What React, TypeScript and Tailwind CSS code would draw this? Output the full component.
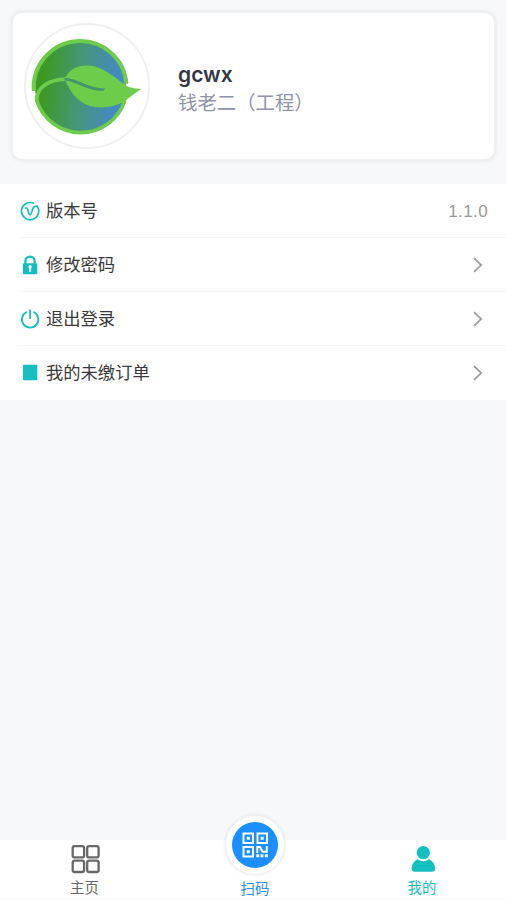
import type { ReactNode } from "react";

interface MenuRowProps {
    icon: ReactNode;
    label: string;
    value?: string;
    last?: boolean;
}

function LeafLogo() {
    return (
        <svg viewBox="25 24 124 124" className="h-[124px] w-[124px] shrink-0">
            <defs>
                <linearGradient id="disc" x1="0" y1="0.45" x2="1" y2="0.55">
                    <stop offset="0.08" stopColor="#3d9921" />
                    <stop offset="0.5" stopColor="#46967a" />
                    <stop offset="0.92" stopColor="#4389c6" />
                </linearGradient>
            </defs>
            <circle cx="80.5" cy="86.2" r="45.5" fill="url(#disc)" />
            <path d="M33.8 91A46.3 46.3 0 0 1 126.4 84" fill="none" stroke="#6dcc49" strokeWidth="4" />
            <path d="M66 79.2C48 79.5 36.4 88 36.7 100.5A46.3 46.3 0 0 0 124.8 100.5" fill="none" stroke="#6dcc49" strokeWidth="3.8" strokeLinejoin="round" />
            <path d="M65 78C70 69 78 65 88 65.5C102 66 113 76 124 84C129 88 134 88.5 141 89C135 93 130 97 125 101C115 107 102 109 90 106C77 102 70 91 65 80Z" fill="#6dcc49" />
            <path d="M64.5 78C78 78 86 88 105.5 88.5L103 90.8C86 91 77 81 64.5 80.4Z" fill="#44956d" />
        </svg>
    );
}

function VersionIcon() {
    return (
        <svg viewBox="0 0 20 20" className="h-5 w-5" fill="none" stroke="#13bfc1" strokeWidth="1.7" strokeLinecap="round" strokeLinejoin="round">
            <path d="M13.4 2.2A8.6 8.6 0 1 0 17.4 5.6" />
            <path d="M5.8 7C7.2 6.6 7.6 8 8.2 10C8.8 12 9.1 14 10 14C11 14 12 9.8 13.1 7.2C13.8 5.6 15.4 4.8 17.2 5.4" />
        </svg>
    );
}

function LockIcon() {
    return (
        <svg viewBox="0 0 20 20" className="h-5 w-5">
            <path d="M5.4 9V6.2C5.4 3.4 7.4 1.6 10 1.6C12.6 1.6 14.6 3.4 14.6 6.2V9" fill="none" stroke="#13bfc1" strokeWidth="2.3" />
            <rect x="2.9" y="8.2" width="14.4" height="11" rx="1" fill="#13bfc1" />
            <path d="M8.4 11.8A1.7 1.7 0 1 1 11.1 13.1V16.8H9V13.1A1.6 1.6 0 0 1 8.4 11.8Z" fill="white" />
        </svg>
    );
}

function PowerIcon() {
    return (
        <svg viewBox="0 0 20 20" className="h-5 w-5" fill="none" stroke="#13bfc1" strokeWidth="1.8" strokeLinecap="round">
            <path d="M6.2 3.2A8.2 8.2 0 1 0 14 3.2M10.1 1.2V9.2" />
        </svg>
    );
}

function OrderIcon() {
    return (
        <svg viewBox="0 0 20 20" className="h-5 w-5">
            <rect x="3" y="1.8" width="14.3" height="15.4" rx="0.8" fill="#13bfc1" />
        </svg>
    );
}

function MenuRow({ icon, label, value, last }: MenuRowProps) {
    return (
        <div className="flex h-[54px] pl-5">
            <div className={`flex flex-1 items-center border-b pr-[19px] ${last ? "border-white" : "border-[#f5f6f7]"}`}>
                {icon}
                <span className="ml-1.5 flex-1 pt-px text-[17.3px] leading-6 text-[#3a3a3a]">{label}</span>
                {value ? (
                    <span className="pt-0.5 text-[17px] tracking-[0.4px] text-[#999]">{value}</span>
                ) : (
                    <svg viewBox="0 0 10 16" className="mr-[5px] h-4 w-2.5" fill="none" stroke="#999" strokeWidth="1.7">
                        <path d="M1 1.2L8.2 8L1 14.8" />
                    </svg>
                )}
            </div>
        </div>
    );
}

function QrIcon() {
    return (
        <svg viewBox="0 0 26 26" className="h-[26px] w-[26px]" fill="none" stroke="white" strokeWidth="2">
            <path d="M1.5 1.5H11V11H1.5ZM15.5 1.5H25V11H15.5ZM1.5 15H11V24.5H1.5Z" />
            <path d="M4.8 4.8H7.8V7.8H4.8ZM18.7 4.8H21.7V7.8H18.7ZM4.8 18.3H7.8V21.3H4.8Z" fill="white" stroke="none" />
            <path d="M15.3 21V15H18L20.5 19.7H24.8V14" />
            <path d="M14.3 22.3H17.3V25.3H14.3ZM18.6 22.3H21.4V25.3H18.6ZM22.8 22.3H25.8V25.3H22.8Z" fill="white" stroke="none" />
        </svg>
    );
}

export default function App() {
    return (
        <div className="flex h-[900px] w-full flex-col bg-[#f6f8fa] font-['Liberation_Sans','Noto_Sans_CJK_SC',sans-serif]">
            <section className="mx-3 mt-3 flex h-[148px] items-center rounded-[10px] border border-[#eff0f2] bg-white pl-[11px] shadow-[0_0_4px_1px_rgba(0,0,0,0.07)]">
                <div className="flex h-[126px] w-[126px] shrink-0 items-center justify-center rounded-full border-2 border-[#f0f0f1] bg-white">
                    <LeafLogo />
                </div>
                <div className="ml-7 flex flex-col pt-[5px]">
                    <h1 className="font-['Inter','Liberation_Sans',sans-serif] text-[21px] leading-[28px] font-semibold text-[#353844]">gcwx</h1>
                    <p className="text-[19.4px] leading-7 text-[#9094a8]">钱老二（工程）</p>
                </div>
            </section>

            <section className="mt-6 bg-white">
                <MenuRow icon={<VersionIcon />} label="版本号" value="1.1.0" />
                <MenuRow icon={<LockIcon />} label="修改密码" />
                <MenuRow icon={<PowerIcon />} label="退出登录" />
                <MenuRow icon={<OrderIcon />} label="我的未缴订单" last />
            </section>

            <nav className="mt-auto grid h-[60px] grid-cols-3 border-b border-[#f2f3f4] bg-white text-[14.4px] leading-5">
                <div className="flex flex-col items-center pt-1 text-[#666]">
                    <svg viewBox="0 0 30 30" className="mb-1 ml-0.5 h-[30px] w-[30px]" fill="none" stroke="#68686a" strokeWidth="2.3">
                        <rect x="1.7" y="2.1" width="11.4" height="11.3" rx="2" />
                        <rect x="16.2" y="2.1" width="11.4" height="11.3" rx="2" />
                        <rect x="1.7" y="16.7" width="11.4" height="11.3" rx="2" />
                        <rect x="16.2" y="16.7" width="11.4" height="11.3" rx="2" />
                    </svg>
                    <span>主页</span>
                </div>
                <div className="flex flex-col items-center text-[#288ef0]">
                    <div className="-mt-[25px] mb-1 ml-0.5 flex h-[60px] w-[60px] shrink-0 items-center justify-center rounded-full border border-[#eef0f2] bg-white shadow-[0_0_3px_1px_rgba(0,0,0,0.06)]">
                        <div className="flex h-[46px] w-[46px] items-center justify-center rounded-full bg-[#1b8fff]">
                            <QrIcon />
                        </div>
                    </div>
                    <span className="ml-[3px]">扫码</span>
                </div>
                <div className="flex flex-col items-center pt-1 text-[#13bfc1]">
                    <svg viewBox="0 0 30 30" className="mb-1 h-[30px] w-[30px]" fill="#13bfc1">
                        <circle cx="15.3" cy="8.7" r="6.6" />
                        <path d="M9.5 15.2C13 17.8 17.6 17.8 21.1 15.2C25 17.2 27.2 20.5 27.2 24.8C27.2 27 25.8 27.8 24 27.8H6.8C4.8 27.8 3.6 27 3.6 24.8C3.6 20.5 5.5 17.2 9.5 15.2Z" />
                    </svg>
                    <span className="-ml-px">我的</span>
                </div>
            </nav>
        </div>
    );
}
